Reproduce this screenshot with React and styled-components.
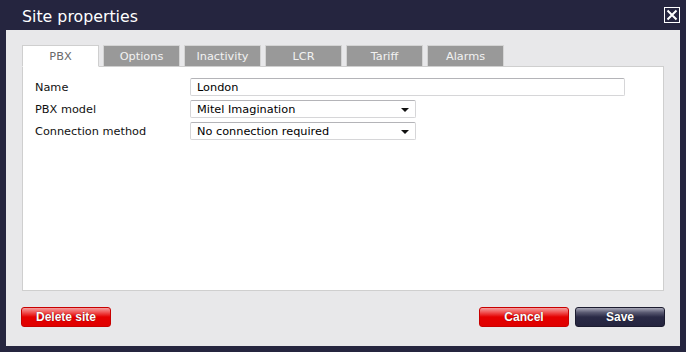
import React from 'react'
import styled, { createGlobalStyle } from 'styled-components'

const GlobalStyle = createGlobalStyle`
  html, body {
    margin: 0;
    padding: 0;
    background: #25253f;
  }
`

const Window = styled.div`
  width: 686px;
  height: 352px;
  box-sizing: border-box;
  padding: 0 6px 6px 6px;
  display: flex;
  flex-direction: column;
  background: #25253f;
`

const TitleBar = styled.div`
  height: 30px;
  box-sizing: border-box;
  display: flex;
  align-items: center;
  justify-content: space-between;
  padding-left: 16px;
`

const Title = styled.h1`
  margin: 3px 0 0 0;
  font-family: "DejaVu Sans", Verdana, sans-serif;
  font-weight: normal;
  font-size: 15.8px;
  color: #ffffff;
`

const CloseButton = styled.div`
  width: 16px;
  height: 16px;
  box-sizing: border-box;
  border: 1px solid #ffffff;
  display: flex;
  align-items: center;
  justify-content: center;
  margin-top: 0px;
`

const Body = styled.div`
  flex: 1;
  background: #e8e8ea;
  padding: 15px 16px 0 16px;
  display: flex;
  flex-direction: column;
`

const Tabs = styled.div`
  display: flex;
  gap: 4px;
  position: relative;
  z-index: 1;
`

const Tab = styled.div`
  width: 77px;
  box-sizing: border-box;
  border: 1px solid ${p => (p.active ? '#cfcfcf' : '#d4d4d4')};
  border-bottom: ${p => (p.active ? '1px solid #ffffff' : 'none')};
  height: ${p => (p.active ? '22px' : '21px')};
  background: ${p => (p.active ? '#ffffff' : '#999999')};
  color: ${p => (p.active ? '#6a6a6a' : '#f2f2f2')};
  font-family: "DejaVu Sans", Verdana, sans-serif;
  font-size: 11.3px;
  display: flex;
  align-items: center;
  justify-content: center;
  padding-top: 1px;
`

const Panel = styled.div`
  height: 225px;
  box-sizing: border-box;
  margin-top: -1px;
  background: #ffffff;
  border: 1px solid #cfcfcf;
  padding: 11px 12px;
  display: flex;
  flex-direction: column;
  gap: 4px;
`

const Row = styled.div`
  display: flex;
  align-items: center;
  height: 18px;
`

const Label = styled.label`
  width: 155px;
  font-family: "DejaVu Sans", Verdana, sans-serif;
  font-size: 11.3px;
  color: #111;
`

const Field = styled.div`
  width: ${p => p.width}px;
  height: 18px;
  box-sizing: border-box;
  border: 1px solid #d6d6d8;
  border-top-color: #b4b4b8;
  border-radius: 2px;
  background: #fff;
  display: flex;
  align-items: center;
  justify-content: space-between;
  padding: 0 6px 0 6px;
  font-family: "DejaVu Sans", Verdana, sans-serif;
  font-size: 11.3px;
  color: #000;
`

const Arrow = styled.span`
  width: 0;
  height: 0;
  border-left: 4px solid transparent;
  border-right: 4px solid transparent;
  border-top: 4px solid #111;
  margin-top: 2px;
`

const Footer = styled.div`
  display: flex;
  align-items: center;
  margin-top: 16px;
  margin-left: -1px;
  margin-right: -1px;
  gap: 6px;
`

const Spacer = styled.div`
  flex: 1;
`

const Button = styled.button`
  width: 90px;
  height: 20px;
  border-radius: 3px;
  border: 1px solid ${p => (p.dark ? '#1c1c30' : '#c80000')};
  background: ${p =>
    p.dark
      ? 'linear-gradient(#a8a8b8 0%, #5a5a72 25%, #2a2a46 50%, #25253f 100%)'
      : 'linear-gradient(#f4a0a0 0%, #f05050 25%, #e40000 50%, #e00000 100%)'};
  color: #ffffff;
  font-family: "Liberation Sans", Arial, sans-serif;
  font-weight: bold;
  font-size: 12px;
  text-shadow: 0 0 1px rgba(0, 0, 0, 0.6);
  padding: 0;
  cursor: pointer;
`

const tabs = ['PBX', 'Options', 'Inactivity', 'LCR', 'Tariff', 'Alarms']

export default function App () {
  return (
    <Window>
      <GlobalStyle />
      <TitleBar>
        <Title>Site properties</Title>
        <CloseButton>
          <svg width='12' height='12' viewBox='0 0 12 12'>
            <path d='M1.5 1.5 L10.5 10.5 M10.5 1.5 L1.5 10.5' stroke='#fff' strokeWidth='2' />
          </svg>
        </CloseButton>
      </TitleBar>
      <Body>
        <Tabs>
          {tabs.map((t, i) => <Tab key={t} active={i === 0}>{t}</Tab>)}
        </Tabs>
        <Panel>
          <Row>
            <Label>Name</Label>
            <Field width={435}>London</Field>
          </Row>
          <Row>
            <Label>PBX model</Label>
            <Field width={226}>Mitel Imagination<Arrow /></Field>
          </Row>
          <Row>
            <Label>Connection method</Label>
            <Field width={226}>No connection required<Arrow /></Field>
          </Row>
        </Panel>
        <Footer>
          <Button>Delete site</Button>
          <Spacer />
          <Button>Cancel</Button>
          <Button dark>Save</Button>
        </Footer>
      </Body>
    </Window>
  )
}
